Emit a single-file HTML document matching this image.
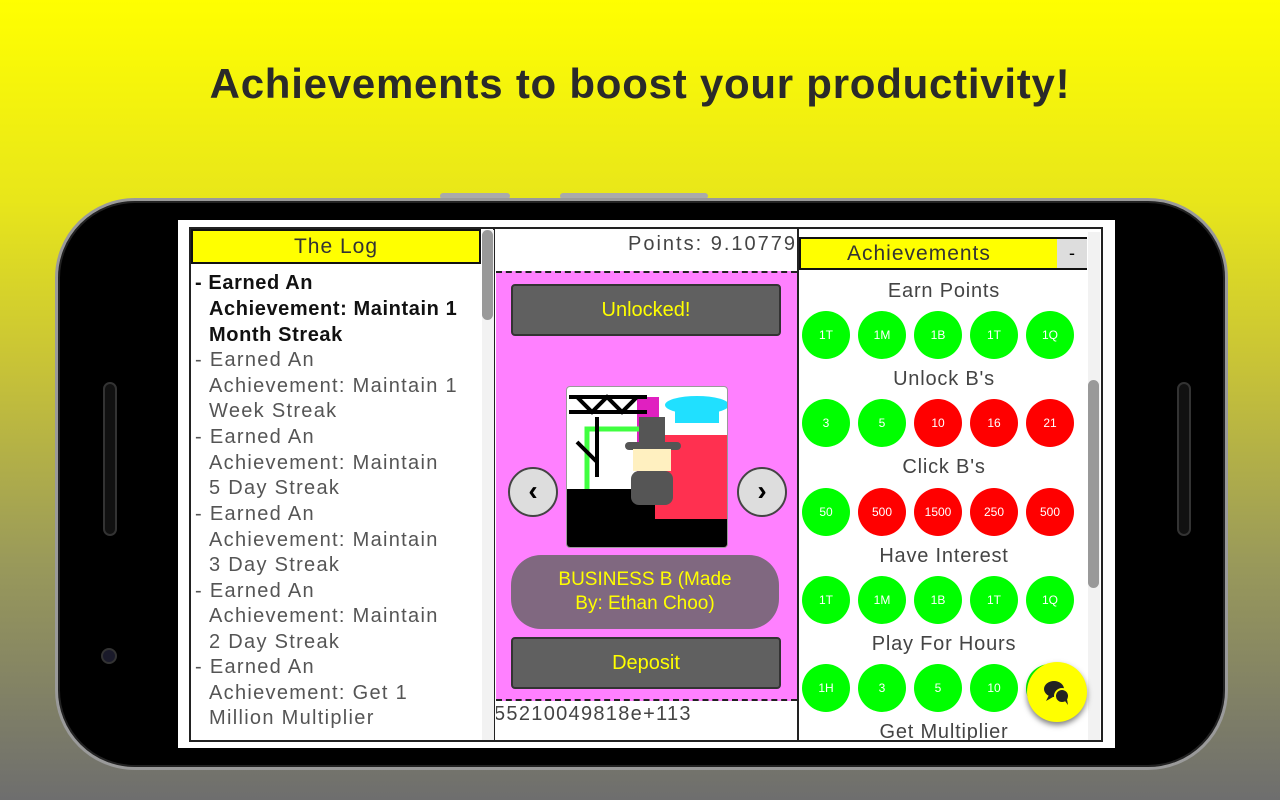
<!DOCTYPE html>
<html><head><meta charset="utf-8"><style>
*{margin:0;padding:0;box-sizing:border-box}
body{width:1280px;height:800px;overflow:hidden;position:relative;font-family:"Liberation Sans",sans-serif;background:linear-gradient(#ffff00 0%,#e8e61a 25%,#c9c436 45%,#9a9a5a 70%,#6e6e6e 100%)}
.a{position:absolute}
h1{position:absolute;top:60px;left:0;width:1280px;text-align:center;font-size:42px;font-weight:bold;color:#2a2a2a;letter-spacing:0.75px}
.phone{left:55px;top:198px;width:1173px;height:572px;border-radius:80px;background:#000;border:3px solid #9a9a9a;box-shadow:inset 0 0 0 2px #222}
.screen{left:178px;top:220px;width:937px;height:528px;background:#fff}
.ln{position:absolute;left:195px;font-size:20px;color:#555;white-space:nowrap;letter-spacing:1.3px}
.b{color:#111;font-weight:bold;letter-spacing:0.6px}
.c{position:absolute;width:48px;height:48px;border-radius:50%;color:#fff;font-size:12px;text-align:center;line-height:48px}
.g{background:#00ff00}.r{background:#ff0000}
.t{position:absolute;left:800px;width:288px;text-align:center;font-size:20px;color:#444;letter-spacing:0.8px}
.btn{position:absolute;left:511px;width:270px;height:52px;background:#606060;border:2px solid #333;border-radius:4px;color:#ffff00;font-size:20px;text-align:center;line-height:48px}
</style></head><body>
<h1>Achievements to boost your productivity!</h1>
<div class="a" style="left:440px;top:193px;width:70px;height:6px;background:#aaa;border-radius:3px"></div>
<div class="a" style="left:560px;top:193px;width:148px;height:6px;background:#aaa;border-radius:3px"></div>
<div class="a phone"></div>
<div class="a" style="left:103px;top:382px;width:14px;height:154px;border-radius:7px;background:#111;border:2px solid #333"></div>
<div class="a" style="left:1177px;top:382px;width:14px;height:154px;border-radius:7px;background:#111;border:2px solid #333"></div>
<div class="a" style="left:101px;top:648px;width:16px;height:16px;border-radius:50%;background:#1a1a2a;border:2px solid #333"></div>
<div class="a screen"></div>
<div class="a" style="left:189px;top:227px;width:914px;height:515px;border:2px solid #222"></div>
<div class="a" style="left:190px;top:229px;width:305px;height:512px;border-right:2px solid #222;overflow:hidden"></div>
<div class="a" style="left:191px;top:229px;width:290px;height:35px;background:#ffff00;border:2px solid #111;text-align:center;font-size:21px;line-height:32px;color:#333;letter-spacing:1px">The Log</div>
<div class="a" style="left:482px;top:230px;width:12px;height:510px;background:#f2f2f2"></div>
<div class="a" style="left:482px;top:230px;width:11px;height:90px;background:#999;border-radius:6px"></div>
<div class="ln b" style="top:272px">- Earned An</div>
<div class="ln b" style="top:298px;left:209px">Achievement: Maintain 1</div>
<div class="ln b" style="top:324px;left:209px">Month Streak</div>
<div class="ln" style="top:349px">- Earned An</div>
<div class="ln" style="top:375px;left:209px">Achievement: Maintain 1</div>
<div class="ln" style="top:400px;left:209px">Week Streak</div>
<div class="ln" style="top:426px">- Earned An</div>
<div class="ln" style="top:452px;left:209px">Achievement: Maintain</div>
<div class="ln" style="top:477px;left:209px">5 Day Streak</div>
<div class="ln" style="top:503px">- Earned An</div>
<div class="ln" style="top:529px;left:209px">Achievement: Maintain</div>
<div class="ln" style="top:554px;left:209px">3 Day Streak</div>
<div class="ln" style="top:580px">- Earned An</div>
<div class="ln" style="top:605px;left:209px">Achievement: Maintain</div>
<div class="ln" style="top:631px;left:209px">2 Day Streak</div>
<div class="ln" style="top:656px">- Earned An</div>
<div class="ln" style="top:682px;left:209px">Achievement: Get 1</div>
<div class="ln" style="top:707px;left:209px">Million Multiplier</div>
<div class="a" style="left:496px;top:229px;width:301px;height:512px;overflow:hidden">
 <div class="a" style="right:0;top:4px;font-size:20px;color:#444;white-space:nowrap;letter-spacing:2px">Points: 9.10779</div>
 <div class="a" style="left:0;top:42px;width:301px;height:430px;background:#ff80ff;border-top:2px dashed #222;border-bottom:2px dashed #222"></div>
 <div class="a" style="left:-2px;top:474px;font-size:20px;color:#444;white-space:nowrap;letter-spacing:1.3px">55210049818e+113</div>
</div>
<div class="btn" style="top:284px">Unlocked!</div>
<div class="a" style="left:566px;top:386px;width:162px;height:162px;background:#fff;border-radius:4px;overflow:hidden;border:1px solid #999">
<svg width="162" height="162" viewBox="0 0 162 162">
<rect x="70" y="10" width="22" height="90" fill="#e020c0"/>
<rect x="20" y="42" width="60" height="80" fill="none" stroke="#40ff40" stroke-width="5"/>
<path d="M2 10h78M2 25h78M10 10l15 15 15-15 15 15 15-15M30 30v60M10 55l20 20" stroke="#000" stroke-width="4" fill="none"/>
<rect x="88" y="48" width="74" height="114" fill="#ff3050"/>
<ellipse cx="130" cy="18" rx="32" ry="9" fill="#20e0ff"/>
<rect x="108" y="22" width="44" height="14" fill="#20e0ff"/>
<rect x="0" y="102" width="162" height="60" fill="#000"/>
<rect x="88" y="100" width="74" height="32" fill="#ff3050"/>
<rect x="72" y="30" width="26" height="30" fill="#555"/><rect x="58" y="55" width="56" height="8" rx="4" fill="#555"/>
<rect x="66" y="62" width="38" height="22" fill="#fff0c0"/>
<rect x="64" y="84" width="42" height="34" rx="8" fill="#555"/>
</svg></div>
<div class="a" style="left:508px;top:467px;width:50px;height:50px;border-radius:50%;background:#ddd;border:2px solid #444;text-align:center;line-height:44px;font-size:28px;font-weight:bold">&#8249;</div>
<div class="a" style="left:737px;top:467px;width:50px;height:50px;border-radius:50%;background:#ddd;border:2px solid #444;text-align:center;line-height:44px;font-size:28px;font-weight:bold">&#8250;</div>
<div class="a" style="left:511px;top:555px;width:268px;height:74px;border-radius:30px;background:#806880;color:#ffff00;font-size:19px;text-align:center;line-height:24px;padding-top:13px">BUSINESS B (Made<br>By: Ethan Choo)</div>
<div class="btn" style="top:637px">Deposit</div>
<div class="a" style="left:797px;top:229px;width:2px;height:512px;background:#222"></div>
<div class="a" style="left:799px;top:237px;width:288px;height:33px;background:#ffff00;border:2px solid #111;border-right:none;font-size:21px;line-height:30px;color:#333;padding-left:46px;letter-spacing:1px">Achievements</div>
<div class="a" style="left:1057px;top:237px;width:30px;height:33px;background:#ddd;border-top:2px solid #111;border-bottom:2px solid #111;text-align:center;line-height:28px;font-size:18px">-</div>
<div class="a" style="left:1088px;top:232px;width:12px;height:508px;background:#f2f2f2"></div>
<div class="a" style="left:1088px;top:380px;width:11px;height:208px;background:#999;border-radius:6px"></div>
<div class="t" style="top:280px">Earn Points</div>
<div class="t" style="top:368px">Unlock B's</div>
<div class="t" style="top:456px">Click B's</div>
<div class="t" style="top:545px">Have Interest</div>
<div class="t" style="top:633px">Play For Hours</div>
<div class="t" style="top:721px;height:19px;overflow:hidden">Get Multiplier</div>
<div class="c g" style="left:802px;top:311px">1T</div><div class="c g" style="left:858px;top:311px">1M</div><div class="c g" style="left:914px;top:311px">1B</div><div class="c g" style="left:970px;top:311px">1T</div><div class="c g" style="left:1026px;top:311px">1Q</div>
<div class="c g" style="left:802px;top:399px">3</div><div class="c g" style="left:858px;top:399px">5</div><div class="c r" style="left:914px;top:399px">10</div><div class="c r" style="left:970px;top:399px">16</div><div class="c r" style="left:1026px;top:399px">21</div>
<div class="c g" style="left:802px;top:488px">50</div><div class="c r" style="left:858px;top:488px">500</div><div class="c r" style="left:914px;top:488px">1500</div><div class="c r" style="left:970px;top:488px">250</div><div class="c r" style="left:1026px;top:488px">500</div>
<div class="c g" style="left:802px;top:576px">1T</div><div class="c g" style="left:858px;top:576px">1M</div><div class="c g" style="left:914px;top:576px">1B</div><div class="c g" style="left:970px;top:576px">1T</div><div class="c g" style="left:1026px;top:576px">1Q</div>
<div class="c g" style="left:802px;top:664px">1H</div><div class="c g" style="left:858px;top:664px">3</div><div class="c g" style="left:914px;top:664px">5</div><div class="c g" style="left:970px;top:664px">10</div><div class="c g" style="left:1026px;top:664px"></div>
<div class="a" style="left:1027px;top:662px;width:60px;height:60px;border-radius:50%;background:#ffff00;box-shadow:0 3px 6px rgba(0,0,0,.5)">
<svg width="60" height="60" viewBox="0 0 60 60"><ellipse cx="27" cy="27" rx="10" ry="8" fill="#222"/><path d="M22 33l-3 6 7-4z" fill="#222"/><circle cx="35" cy="34" r="7" fill="#222" stroke="#ffff00" stroke-width="2"/><path d="M38 39l3 4-1-6z" fill="#222"/></svg></div>
</body></html>
